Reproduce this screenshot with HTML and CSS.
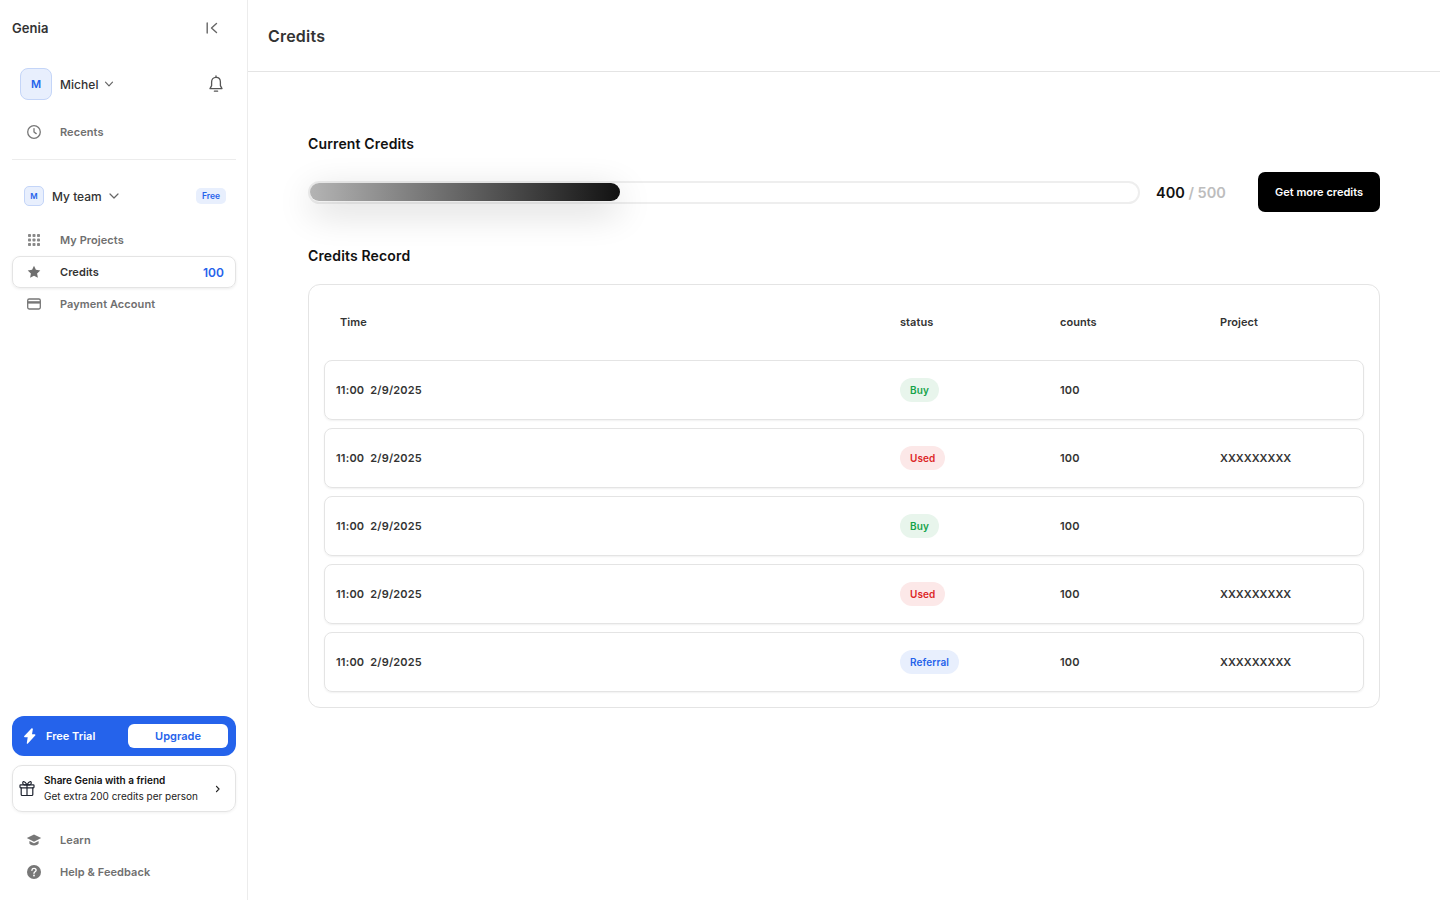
FILE: index.html
```html
<!DOCTYPE html>
<html lang="en">
<head>
<meta charset="utf-8">
<title>Credits</title>
<link rel="stylesheet" href="styles.css">
</head>
<body>
<div class="app">
  <aside class="sidebar">
    <div class="brand-row">
      <span class="brand">Genia</span>
      <svg class="collapse" width="16" height="16" viewBox="0 0 16 16" fill="none" stroke="#666" stroke-width="1.4" stroke-linecap="round" stroke-linejoin="round"><path d="M3.200 3v10"/><path d="M12.500 3.500 7.500 8l5 4.500"/></svg>
    </div>
    <div class="user-row">
      <span class="avatar">M</span>
      <span class="user-name">Michel</span>
      <svg class="chev" width="10" height="10" viewBox="0 0 10 10" fill="none" stroke="#666" stroke-width="1.200" stroke-linecap="round" stroke-linejoin="round"><path d="M1.500 3.200 5 6.800l3.500-3.600"/></svg>
      <svg class="bell" width="16" height="18" viewBox="0 0 16 18" fill="none" stroke="#555" stroke-width="1.300" stroke-linecap="round" stroke-linejoin="round"><path d="M8 2.400c-2.700 0-4.400 2-4.400 4.600v3.600L2 13.600h12l-1.600-3V7c0-2.600-1.700-4.600-4.400-4.600Z"/><path d="M8 1v1.400"/><path d="M6.400 16.200h3.200"/></svg>
    </div>
    <a class="nav-item">
      <svg class="nav-icon" width="16" height="16" viewBox="0 0 16 16" fill="none" stroke="#777" stroke-width="1.300" stroke-linecap="round" stroke-linejoin="round"><circle cx="8" cy="8" r="6.300"/><path d="M8 4.600V8l2.200 1.600"/></svg>
      <span>Recents</span>
    </a>
    <div class="divider"></div>
    <div class="team-row">
      <span class="team-avatar">M</span>
      <span class="team-name">My team</span>
      <svg class="team-chev" width="12" height="12" viewBox="0 0 12 12" fill="none" stroke="#666" stroke-width="1.200" stroke-linecap="round" stroke-linejoin="round"><path d="M2 4l4 4 4-4"/></svg>
      <span class="plan">Free</span>
    </div>
    <nav class="nav-group">
      <a class="nav-item">
        <svg class="nav-icon" width="16" height="16" viewBox="0 0 16 16" fill="#888"><rect x="2" y="2" width="3" height="3" rx=".8"/><rect x="6.500" y="2" width="3" height="3" rx=".8"/><rect x="11" y="2" width="3" height="3" rx=".8"/><rect x="2" y="6.500" width="3" height="3" rx=".8"/><rect x="6.500" y="6.500" width="3" height="3" rx=".8"/><rect x="11" y="6.500" width="3" height="3" rx=".8"/><rect x="2" y="11" width="3" height="3" rx=".8"/><rect x="6.500" y="11" width="3" height="3" rx=".8"/><rect x="11" y="11" width="3" height="3" rx=".8"/></svg>
        <span>My Projects</span>
      </a>
      <a class="nav-item active">
        <svg class="nav-icon" width="16" height="16" viewBox="0 0 16 16" fill="#6e6e6e"><path d="m8 1.800 1.900 4 4.400.6-3.200 3 .8 4.400L8 11.700l-3.900 2.100.8-4.400-3.200-3 4.400-.6Z"/></svg>
        <span>Credits</span>
        <span class="count">100</span>
      </a>
      <a class="nav-item">
        <svg class="nav-icon" width="16" height="16" viewBox="0 0 16 16" fill="none"><rect x="1.700" y="3" width="12.600" height="10" rx="1.400" stroke="#777" stroke-width="1.300"/><rect x="1.700" y="5.200" width="12.600" height="2.400" fill="#777"/></svg>
        <span>Payment Account</span>
      </a>
    </nav>
    <div class="spacer"></div>
    <div class="trial">
      <svg class="bolt" width="14" height="16" viewBox="0 0 14 16" fill="#fff"><path d="M8.400.4 1.300 8c-.5.500-.2 1.200.5 1.200h2.900l-.9 5.800c-.1.700.6 1 1.100.5l7.300-8c.5-.5.2-1.200-.5-1.200H9l.9-5.300C10 .3 8.900-.1 8.400.4Z"/></svg>
      <span class="trial-label">Free Trial</span>
      <button class="upgrade">Upgrade</button>
    </div>
    <div class="share">
      <svg class="gift" width="16" height="17" viewBox="0 0 16 17" fill="none" stroke="#1f2430" stroke-width="1.200" stroke-linecap="round" stroke-linejoin="round"><rect x="1" y="4.800" width="14" height="3" rx=".7"/><path d="M2.200 7.800V14.500c0 .6.400 1 1 1h9.600c.6 0 1-.4 1-1V7.800"/><path d="M8 4.800v10.700"/><path d="M8 4.800C6.800 2.500 5.600 1.300 4.500 1.600 3.200 2 3.600 4.300 5 4.800Z"/><path d="M8 4.800c1.200-2.300 2.400-3.500 3.500-3.200 1.300.4.900 2.700-.5 3.200Z"/></svg>
      <div class="share-text">
        <strong>Share Genia with a friend</strong>
        <span>Get extra 200 credits per person</span>
      </div>
      <svg class="share-arrow" width="8" height="8" viewBox="0 0 8 8" fill="none" stroke="#222" stroke-width="1.200" stroke-linecap="round" stroke-linejoin="round"><path d="M2.500 1.300 5 4 2.500 6.700"/></svg>
    </div>
    <nav class="nav-foot">
      <a class="nav-item">
        <svg class="nav-icon" width="16" height="16" viewBox="0 0 16 16" fill="#777"><path d="M8 2.400.8 6 8 9.700 15.200 6Z"/><path d="M3.400 9v2.600c0 .5 2 2 4.600 2s4.600-1.500 4.600-2V9L8 11.300Z"/></svg>
        <span>Learn</span>
      </a>
      <a class="nav-item">
        <svg class="nav-icon" width="16" height="16" viewBox="0 0 16 16"><circle cx="8" cy="8" r="7" fill="#777"/><path d="M5.900 6.200C6 5 6.900 4.400 8 4.400c1.200 0 2.100.7 2.100 1.800 0 1.600-2.100 1.600-2.100 3.100" fill="none" stroke="#fff" stroke-width="1.400" stroke-linecap="round"/><circle cx="8" cy="11.500" r=".9" fill="#fff"/></svg>
        <span>Help &amp; Feedback</span>
      </a>
    </nav>
  </aside>
  <main class="main">
    <header class="page-head"><h1>Credits</h1></header>
    <div class="content">
      <h2 class="section-title">Current Credits</h2>
      <div class="meter-row">
        <div class="meter"><div class="meter-fill"></div></div>
        <div class="meter-value"><b>400</b><span> / 500</span></div>
        <button class="more">Get more credits</button>
      </div>
      <h2 class="section-title second">Credits Record</h2>
      <section class="record">
        <div class="grid head">
          <span>Time</span><span>status</span><span>counts</span><span>Project</span>
        </div>
        <div class="grid row">
          <span class="time">11:00&nbsp; 2/9/2025</span><span><i class="tag buy">Buy</i></span><span class="num">100</span><span></span>
        </div>
        <div class="grid row">
          <span class="time">11:00&nbsp; 2/9/2025</span><span><i class="tag used">Used</i></span><span class="num">100</span><span>XXXXXXXXX</span>
        </div>
        <div class="grid row">
          <span class="time">11:00&nbsp; 2/9/2025</span><span><i class="tag buy">Buy</i></span><span class="num">100</span><span></span>
        </div>
        <div class="grid row">
          <span class="time">11:00&nbsp; 2/9/2025</span><span><i class="tag used">Used</i></span><span class="num">100</span><span>XXXXXXXXX</span>
        </div>
        <div class="grid row">
          <span class="time">11:00&nbsp; 2/9/2025</span><span><i class="tag referral">Referral</i></span><span class="num">100</span><span>XXXXXXXXX</span>
        </div>
      </section>
    </div>
  </main>
</div>
</body>
</html>
```
FILE: styles.css
```css
* { box-sizing: border-box; }
html, body { margin: 0; height: 100%; }
body {
  font-family: Inter, "Noto Sans", sans-serif;
  color: #333;
  background: #fff;
  overflow: hidden;
}
.app { display: flex; height: 900px; }

.sidebar {
  width: 248px;
  flex: none;
  border-right: 1px solid #ececec;
  padding: 12px 11px 12px 12px;
  display: flex;
  flex-direction: column;
}
.brand-row {
  height: 32px;
  display: flex;
  align-items: center;
  justify-content: space-between;
  padding-right: 16px;
}
.brand { font-size: 13px; font-weight: 600; color: #333; letter-spacing: .05px; }
.collapse { display: block; }
.user-row {
  margin-top: 24px;
  height: 32px;
  padding-left: 8px;
  display: flex;
  align-items: center;
}
.avatar {
  width: 32px;
  height: 32px;
  border-radius: 8px;
  background: #e8effd;
  border: 1px solid #c4d5f8;
  color: #2563eb;
  font-size: 11px;
  font-weight: 600;
  display: flex;
  align-items: center;
  justify-content: center;
}
.user-name { margin-left: 8px; font-size: 12px; font-weight: 500; color: #333; letter-spacing: .05px; }
.chev { margin-left: 5px; }
.bell { margin-left: auto; margin-right: 12px; }

.nav-item {
  height: 32px;
  padding: 0 11px 0 14px;
  display: flex;
  align-items: center;
  font-size: 11px;
  font-weight: 600;
  letter-spacing: .07px;
  color: #6f6f6f;
  border: 1px solid transparent;
  border-radius: 8px;
}
.nav-item > .nav-icon { flex: none; margin-right: 18px; margin-left: -1px; }
.user-row + .nav-item { margin-top: 16px; }
.nav-item.active {
  color: #333;
  border-color: #e4e4e4;
  box-shadow: 0 1px 3px rgba(0, 0, 0, .08);
}
.count { margin-left: auto; font-size: 12px; color: #2563eb; font-weight: 600; }

.divider { height: 1px; background: #ececec; margin-top: 11px; }
.team-row {
  margin-top: 26px;
  height: 20px;
  padding: 0 10px 0 12px;
  display: flex;
  align-items: center;
}
.team-avatar {
  width: 20px;
  height: 20px;
  border-radius: 5px;
  background: #e8effd;
  border: 1px solid #c4d5f8;
  color: #2563eb;
  font-size: 8px;
  font-weight: 600;
  display: flex;
  align-items: center;
  justify-content: center;
}
.team-name { margin-left: 8px; font-size: 12px; font-weight: 500; color: #333; }
.team-chev { margin-left: 6px; }
.plan {
  margin-left: auto;
  padding: 0 6px;
  height: 16px;
  line-height: 16px;
  border-radius: 5px;
  background: #e8effd;
  color: #2563eb;
  font-size: 8.500px;
  font-weight: 600;
}
.nav-group { margin-top: 18px; display: flex; flex-direction: column; }
.spacer { flex: 1; }

.trial {
  height: 40px;
  border-radius: 12px;
  background: #2563eb;
  padding: 0 8px 0 11px;
  display: flex;
  align-items: center;
}
.bolt { flex: none; }
.trial-label { margin-left: 9px; color: #fff; font-size: 11px; font-weight: 600; }
.upgrade {
  margin-left: auto;
  width: 100px;
  height: 24px;
  border: 0;
  border-radius: 6px;
  background: #fff;
  color: #2563eb;
  font: 600 11px Inter, sans-serif;
}
.share {
  margin-top: 9px;
  height: 47px;
  border: 1px solid #e4e4e4;
  border-radius: 10px;
  box-shadow: 0 1px 3px rgba(0, 0, 0, .06);
  padding: 0 13px 0 6px;
  display: flex;
  align-items: center;
}
.gift { flex: none; }
.share-text {
  margin-left: 9px;
  display: flex;
  flex-direction: column;
  gap: 3px;
  font-size: 10px;
  line-height: 13px;
  color: #222;
}
.share-text strong { font-weight: 600; color: #111; }
.share-arrow { margin-left: auto; }
.nav-foot { margin-top: 12px; display: flex; flex-direction: column; }

.main { flex: 1; min-width: 0; }
.page-head {
  height: 72px;
  border-bottom: 1px solid #e4e4e4;
  padding: 0 20px;
  display: flex;
  align-items: center;
}
.page-head h1 { margin: 0; font-size: 16px; font-weight: 600; color: #333; letter-spacing: .2px; }
.content { padding: 62px 60px 0; }
.section-title {
  margin: 0;
  height: 20px;
  line-height: 20px;
  font-size: 14px;
  font-weight: 600;
  letter-spacing: .15px;
  color: #111;
}
.second { margin-top: 34px; }
.meter-row { margin-top: 18px; display: flex; align-items: center; height: 40px; }
.meter {
  width: 832px;
  height: 23px;
  border: 2px solid #eee;
  border-radius: 12px;
  background: #fff;
  flex: none;
}
.meter-fill {
  width: 310px;
  height: 18px;
  border-radius: 9px;
  background: linear-gradient(90deg, #b4b4b4 0%, #111 100%);
  box-shadow: 0 10px 36px rgba(0, 0, 0, .2);
}
.meter-value { margin-left: 16px; font-size: 14.500px; font-weight: 600; color: #bdbdbd; white-space: nowrap; }
.meter-value b { color: #111; font-weight: 600; }
.more {
  margin-left: auto;
  width: 122px;
  height: 40px;
  border: 0;
  border-radius: 7px;
  background: #000;
  color: #fff;
  font: 600 11px Inter, sans-serif;
}
.record {
  margin-top: 18px;
  height: 424px;
  border: 1px solid #e4e4e4;
  border-radius: 12px;
  padding: 0 15px;
  display: flex;
  flex-direction: column;
}
.grid {
  display: grid;
  grid-template-columns: 564px 160px 160px 1fr;
  align-items: center;
  font-size: 11px;
  font-weight: 600;
  color: #333;
}
.head {
  height: 74px;
  margin-bottom: 1px;
  padding-left: 16px;
  grid-template-columns: 560px 160px 160px 1fr;
  letter-spacing: .05px;
}
.row {
  height: 60px;
  margin-bottom: 8px;
  padding-left: 11px;
  border: 1px solid #e4e4e4;
  border-radius: 8px;
  box-shadow: 0 1px 2px rgba(0, 0, 0, .06);
}
.time { letter-spacing: .2px; }
.num { letter-spacing: .15px; }
.tag {
  display: inline-block;
  height: 24px;
  line-height: 24px;
  padding: 0 10px;
  border-radius: 12px;
  font-size: 10px;
  font-style: normal;
  font-weight: 600;
  letter-spacing: .1px;
}
.buy { background: #e8f5ec; color: #16a34a; }
.used { background: #fce8e8; color: #dc2626; }
.referral { background: #e8effd; color: #2563eb; }
```
